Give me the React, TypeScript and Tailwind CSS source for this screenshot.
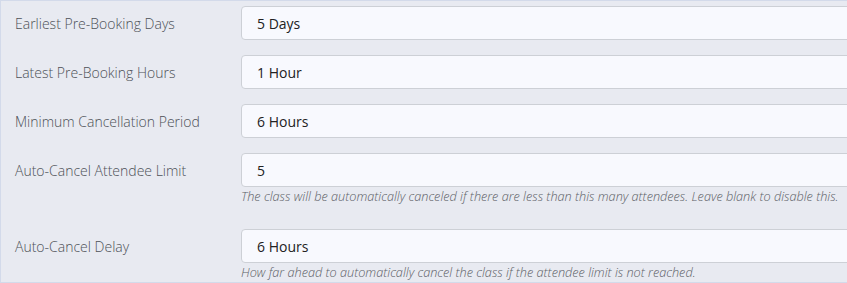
import React from 'react';

type Row = { label: string; value: string; help?: string };

const rows: Row[] = [
  { label: 'Earliest Pre-Booking Days', value: '5 Days' },
  { label: 'Latest Pre-Booking Hours', value: '1 Hour' },
  { label: 'Minimum Cancellation Period', value: '6 Hours' },
  {
    label: 'Auto-Cancel Attendee Limit',
    value: '5',
    help: 'The class will be automatically canceled if there are less than this many attendees. Leave blank to disable this.',
  },
  {
    label: 'Auto-Cancel Delay',
    value: '6 Hours',
    help: 'How far ahead to automatically cancel the class if the attendee limit is not reached.',
  },
];

const App: React.FC = () => {
  return (
    <div className="w-full h-[283px] overflow-hidden" style={{ fontFamily: '"Open Sans", sans-serif' }}>
      <div className="w-[900px] h-[283px] bg-[#e8eaf1] border border-[#d3daea] pt-[5px]">
        {rows.map((row) => (
          <div key={row.label} className={`flex ${row.help ? 'mb-[25px]' : 'mb-[15px]'}`}>
            <div className="w-[240px] shrink-0 pl-[14px] h-[34px] flex items-center text-[14px] font-light text-[#4d5157]">
              {row.label}
            </div>
            <div className="flex-1">
              <div className="h-[34px] rounded-[4px] border border-[#cdd0d6] bg-[#f8f9fe] pl-[15px] flex items-center text-[14px] text-[#222]">
                {row.value}
              </div>
              {row.help && (
                <div className="mt-[1px] text-[12.7px] font-light italic text-[#5c6066] leading-[16px] whitespace-nowrap">
                  {row.help}
                </div>
              )}
            </div>
          </div>
        ))}
      </div>
    </div>
  );
};

export default App;
